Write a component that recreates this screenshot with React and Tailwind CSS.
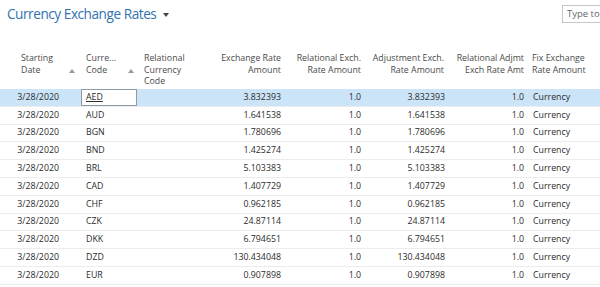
import React from "react";

const rows = [
  ["AED", "3.832393"],
  ["AUD", "1.641538"],
  ["BGN", "1.780696"],
  ["BND", "1.425274"],
  ["BRL", "5.103383"],
  ["CAD", "1.407729"],
  ["CHF", "0.962185"],
  ["CZK", "24.87114"],
  ["DKK", "6.794651"],
  ["DZD", "130.434048"],
  ["EUR", "0.907898"],
];

const cols = "grid grid-cols-[78px_62px_65px_82px_80px_83px_80px_70px]";

function Arrow() {
  return (
    <svg width="6" height="4" viewBox="0 0 6 4" className="absolute">
      <path d="M0 4 L3 0 L6 4 Z" fill="#9a9a9a" />
    </svg>
  );
}

export default function App() {
  return (
    <div
      className="w-[600px] h-[287px] bg-white overflow-hidden text-[#333]"
      style={{ fontFamily: '"Open Sans", "Noto Sans", sans-serif' }}
    >
      <div className="flex items-start h-[50px]">
        <div className="pl-[7px] pt-[4px] flex items-center">
          <span className="text-[13.6px] text-[#3272b0] tracking-[-0.45px]">Currency Exchange Rates</span>
          <svg width="6" height="4" viewBox="0 0 6 4" className="ml-[7px] mt-[1px]">
            <path d="M0 0 L6 0 L3 4 Z" fill="#444" />
          </svg>
        </div>
        <div className="ml-auto mt-[5px] h-[18px] w-[38px] border border-[#c6c6c6] border-r-0 pl-[4px] text-[9.5px] leading-[16px] text-[#666] whitespace-nowrap overflow-hidden">
          Type to
        </div>
      </div>
      <div className={`${cols} h-[39px] text-[8.8px] leading-[11.5px] text-[#4a4a4a] pt-[3px]`}>
        <div className="relative pl-[21px]">
          Starting<br />Date
          <span className="absolute left-[69px] top-[16px]"><Arrow /></span>
        </div>
        <div className="relative pl-[8px]">
          Curre...<br />Code
          <span className="absolute left-[50px] top-[16px]"><Arrow /></span>
        </div>
        <div className="pl-[4px]">Relational<br />Currency<br />Code</div>
        <div className="text-right pr-[6px]">Exchange Rate<br />Amount</div>
        <div className="text-right pr-[6px] whitespace-nowrap">Relational Exch.<br />Rate Amount</div>
        <div className="text-right pr-[6px] whitespace-nowrap">Adjustment Exch.<br />Rate Amount</div>
        <div className="text-right pr-[6px] whitespace-nowrap">Relational Adjmt<br />Exch Rate Amt</div>
        <div className="pl-[2px] whitespace-nowrap">Fix Exchange<br />Rate Amount</div>
      </div>
      {rows.map(([code, amt], i) => (
        <div
          key={code}
          className={`${cols} h-[17.8px] items-center text-[8.8px] text-[#2b2b2b] border-b border-[#ececec] ${i === 0 ? "bg-[#cce4f7]" : ""}`}
        >
          <div className="text-right pr-[19px]">3/28/2020</div>
          <div className="pl-[3px] pr-[3px] h-full flex items-center">
            {i === 0 ? (
              <div className="w-full h-[17px] border border-[#8f9aa5] bg-white pl-[4px] flex items-center underline">
                {code}
              </div>
            ) : (
              <span className="pl-[5px]">{code}</span>
            )}
          </div>
          <div></div>
          <div className="text-right pr-[6px]">{amt}</div>
          <div className="text-right pr-[6px]">1.0</div>
          <div className="text-right pr-[5px]">{amt}</div>
          <div className="text-right pr-[6px]">1.0</div>
          <div className="pl-[3px]">Currency</div>
        </div>
      ))}
    </div>
  );
}
